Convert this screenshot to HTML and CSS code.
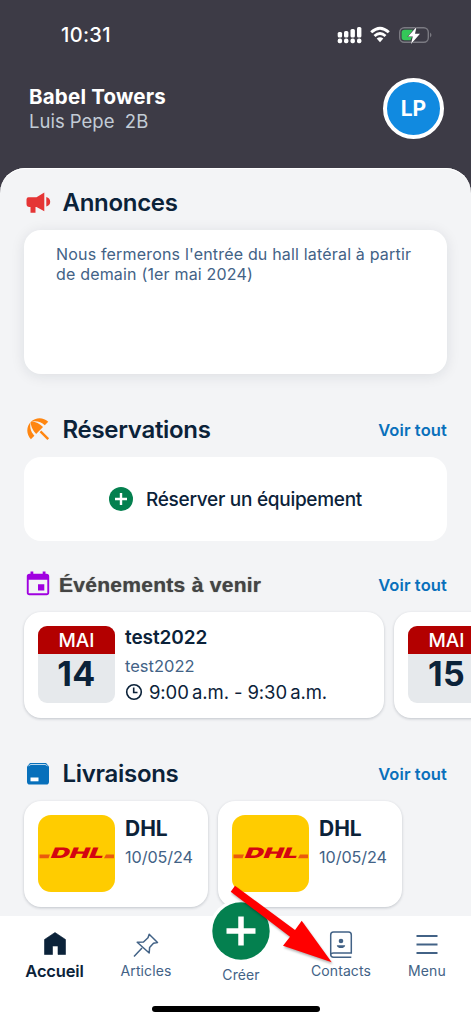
FILE: index.html
```html
<!DOCTYPE html>
<html lang="fr">
<head>
<meta charset="utf-8">
<title>Babel Towers</title>
<link rel="stylesheet" href="styles.css">
</head>
<body>
<div class="app">
  <header class="top">
    <div class="status">
      <span class="clock">10:31</span>
      <svg class="status-icons" width="96" height="20" viewBox="0 0 96 20">
        <g fill="#fff">
          <rect x=".7" y="7" width="4.400" height="5.500" rx="1.500"/><rect x="7" y="6" width="4.400" height="6.500" rx="1.500"/><rect x="13.500" y="4" width="4.400" height="8.500" rx="1.500"/><rect x="20" y="2" width="4.400" height="10.500" rx="1.500"/>
          <rect x=".7" y="13.600" width="4.400" height="4.600" rx="1.800"/><rect x="7" y="13.600" width="4.400" height="4.600" rx="1.800"/><rect x="13.500" y="13.600" width="4.400" height="4.600" rx="1.800"/><rect x="20" y="13.600" width="4.400" height="4.600" rx="1.800"/>
        </g>
        <g fill="none" stroke="#fff" stroke-width="2.900">
          <path d="M34.200 7.300Q43 -.9 51.800 7.300"/><path d="M37.500 11Q43 6 48.500 11"/>
        </g>
        <path d="M39.700 13.600Q43 10.900 46.300 13.600L43 17.200Z" fill="#fff"/>
        <rect x="62.700" y="2.700" width="28.600" height="14.600" rx="4.500" fill="none" stroke="#7b7a82" stroke-width="1.400"/>
        <path d="M93 7.500q3 2.500 0 5z" fill="#7b7a82"/>
        <path d="M67.500 4.800H76L71 12H75L73.500 15.300H67.500Q64.600 15.300 64.600 12.500V7.500Q64.600 4.800 67.500 4.800Z" fill="#34c759"/>
        <path d="M79.500 2L71 11.500H75.800L74 19L83 8.800H78Z" fill="#fff" stroke="#3d3b46" stroke-width="1" paint-order="stroke"/>
      </svg>
    </div>
    <div class="profile">
      <div>
        <div class="building">Babel Towers</div>
        <div class="resident">Luis Pepe&nbsp; 2B</div>
      </div>
      <div class="avatar">LP</div>
    </div>
  </header>

  <main class="sheet">
    <section class="section first">
      <div class="head">
        <svg class="head-icon" width="28" height="28" viewBox="0 0 28 28"><path fill="#e53535" d="M4.500 8.200H12.500L20.300 3.400V22.200L12.500 18H11.500V23.800H6.500V18H5.500Q2.500 18 2.500 15V10.500Q2.500 8.200 4.500 8.200ZM22.300 8Q26.200 9.200 26.200 12.800T22.300 17.500Z"/></svg>
        <h2 class="title t-ann">Annonces</h2>
      </div>
      <div class="card announce"><p class="announce-text">Nous fermerons l'entrée du hall latéral à partir<br>de demain (1er mai 2024)</p></div>
    </section>

    <section class="section">
      <div class="head">
        <svg class="head-icon" width="28" height="28" viewBox="0 0 28 28"><path fill="#ff8611" transform="translate(-.3 -1.400) scale(1.210)" d="M13.127 14.560l1.430-1.430 6.440 6.443L19.570 21zm4.293-5.730l2.860-2.860c-3.950-3.950-10.350-3.960-14.300-.02 3.930-1.300 8.310-.25 11.440 2.880zM5.950 5.980c-3.940 3.950-3.930 10.350.02 14.300l2.860-2.860C5.700 14.290 4.650 9.910 5.950 5.980zm.02-.02l-.01.01c-.38 3.010 1.170 6.880 4.300 10.020l5.720-5.720c-3.130-3.130-7-4.690-10.010-4.310z"/></svg>
        <h2 class="title t-res">Réservations</h2>
        <a class="more">Voir tout</a>
      </div>
      <div class="card reserve">
        <svg width="24" height="24" viewBox="0 0 24 24"><circle cx="12" cy="12" r="12" fill="#04804f"/><path d="M12 6v12M6 12h12" stroke="#fff" stroke-width="2.400"/></svg>
        <span class="reserve-text">Réserver un équipement</span>
      </div>
    </section>

    <section class="section tight">
      <div class="head events-head">
        <svg class="head-icon" width="28" height="28" viewBox="0 0 28 28"><path fill="#a000e0" fill-rule="evenodd" d="M6.500 .5H9.300V2.800H18.700V.5H21.500V2.800H22.500Q25.200 2.800 25.200 5.500V21.500Q25.200 24.200 22.500 24.200H5.500Q2.800 24.200 2.800 21.500V5.500Q2.800 2.800 5.500 2.800H6.500ZM4.700 8.800V22.200H23.300V8.800ZM14 13.200H20.300V19.500H14Z"/></svg>
        <h2 class="title t-evt">Événements à venir</h2>
        <a class="more">Voir tout</a>
      </div>
      <div class="row">
        <article class="card event">
          <div class="date"><span class="month">MAI</span><span class="day">14</span></div>
          <div class="info">
            <div class="name">test2022</div>
            <div class="sub">test2022</div>
            <div class="time"><svg width="18" height="18" viewBox="0 0 18 18" fill="none" stroke="#0b2239" stroke-width="1.600"><circle cx="9" cy="9" r="7.300"/><path d="M8.700 4.500V9.500H12.500"/></svg><span>9:00&#8239;a.m. - 9:30&#8239;a.m.</span></div>
          </div>
        </article>
        <article class="card event">
          <div class="date"><span class="month">MAI</span><span class="day">15</span></div>
        </article>
      </div>
    </section>

    <section class="section">
      <div class="head">
        <svg class="head-icon" width="28" height="28" viewBox="0 0 28 28"><path fill="#0870bb" d="M6 3H22L25 6.500V21.700Q25 24.500 22.200 24.500H5.800Q3 24.500 3 21.700V6.500Z"/><path d="M4.600 6.200Q5.500 4.500 7 4.500H21Q22.500 4.500 23.400 6.200" fill="none" stroke="#b9d9ef" stroke-width="1"/><rect x="6.500" y="17.500" width="8" height="3.800" fill="#fff"/></svg>
        <h2 class="title t-liv">Livraisons</h2>
        <a class="more">Voir tout</a>
      </div>
      <div class="row">
        <article class="card parcel">
          <svg class="brand" width="77" height="77" viewBox="0 0 77 77"><rect width="77" height="77" rx="13" fill="#fc0"/><path d="M1.500 39.500H12L10.500 43.300H1.500ZM68 39.500H76V43.300H66Z" fill="#ea5b0c"/><text class="dhl" x="11.500" y="43.300" textLength="53" lengthAdjust="spacingAndGlyphs" transform="translate(17.500 0) skewX(-22)">DHL</text></svg>
          <div class="info"><div class="carrier">DHL</div><div class="sub sub-date">10/05/24</div></div>
        </article>
        <article class="card parcel">
          <svg class="brand" width="77" height="77" viewBox="0 0 77 77"><rect width="77" height="77" rx="13" fill="#fc0"/><path d="M1.500 39.500H12L10.500 43.300H1.500ZM68 39.500H76V43.300H66Z" fill="#ea5b0c"/><text class="dhl" x="11.500" y="43.300" textLength="53" lengthAdjust="spacingAndGlyphs" transform="translate(17.500 0) skewX(-22)">DHL</text></svg>
          <div class="info"><div class="carrier">DHL</div><div class="sub sub-date">10/05/24</div></div>
        </article>
      </div>
    </section>
  </main>

  <nav class="tabs">
    <a class="tab active"><svg width="28" height="28" viewBox="0 0 28 28"><path fill="#0b2239" d="M14 2.500L24.500 9.500V24.500H17V16H11.500V24.500H3.500V9.500Z" stroke="#0b2239" stroke-width=".6" stroke-linejoin="round"/></svg><span class="t-home">Accueil</span></a>
    <a class="tab"><svg width="28" height="28" viewBox="0 0 28 28" fill="none" stroke="#426286" stroke-width="1.500" stroke-linejoin="round"><path d="M17.200 4.200L25.500 12.500L21.500 13.200L17.600 17.500L17.200 23L5.200 12.300L11.500 12L16 7.800ZM10 18L2 26.500"/></svg><span class="t-art">Articles</span></a>
    <a class="tab create"><span class="fab"><svg width="58" height="58" viewBox="0 0 58 58"><circle cx="29" cy="29" r="28.700" fill="#04804f"/><path d="M29 14.500V43.500M14.500 29H43.500" stroke="#fff" stroke-width="5.500"/></svg></span><span class="t-create">Créer</span></a>
    <a class="tab"><svg width="28" height="28" viewBox="0 0 28 28" fill="none" stroke="#426286" stroke-width="1.500"><path d="M24.300 27.200H6.500Q3.700 27.200 3.700 24.500V5Q3.700 2 6.500 2H21.500Q24.300 2 24.300 5V23H6.500Q3.700 23 3.700 25"/><circle cx="14" cy="11" r="2.300" fill="#426286" stroke="none"/><path d="M9.800 15.200H18.200Q17.800 18 14 18T9.800 15.200Z" fill="#426286" stroke="none"/></svg><span class="t-con">Contacts</span></a>
    <a class="tab"><svg width="28" height="28" viewBox="0 0 28 28" stroke="#426286" stroke-width="2"><path d="M3.500 6H24.500M3.500 14.500H24.500M3.500 23H24.500"/></svg><span class="t-menu">Menu</span></a>
    <span class="home-bar"></span>
  </nav>
  <svg class="arrow" width="110" height="85" viewBox="0 0 110 85"><path fill="red" d="M10 5.700L70 50L76.700 40.700L106.700 82.300L58 65.700L65 56.700L5.700 11.700Z"/></svg>
</div>
</body>
</html>
```
FILE: styles.css
```css
* { box-sizing: border-box; }
body { margin: 0; background: #3d3b46; font-family: Inter, "Liberation Sans", sans-serif; }
.app { position: relative; width: 471px; height: 1022px; overflow: hidden; display: flex; flex-direction: column; color: #0b2239; white-space: nowrap; }

.top { height: 168px; padding: 25px 27px 0 29px; color: #fff; flex: none; }
.status { display: flex; justify-content: space-between; height: 20px; align-items: center; padding: 0 11px 0 32px; }
.status-icons { flex: none; }
.clock { font-size: 20px; font-weight: 500; line-height: 22px; letter-spacing: .35px; }
.profile { display: flex; justify-content: space-between; align-items: center; margin-top: 32px; height: 62px; }
.building { font-size: 20.500px; font-weight: 700; line-height: 25px; letter-spacing: .2px; margin-top: 2px; }
.resident { font-size: 18.500px; line-height: 25px; color: #c3ccd6; }
.avatar { width: 61px; height: 61px; border: 4px solid #fff; border-radius: 50%; background: #118ae0; display: grid; place-items: center; font-size: 21px; font-weight: 700; }

.sheet { height: 748px; flex: none; background: #f3f4f6; border-radius: 25px 25px 0 0; padding: 8px 24px 0; overflow: hidden; box-shadow: inset 0 1px 0 #fff; }
.section { margin-top: 29px; }
.section.first { margin-top: 0; }
.section.tight { margin-top: 17px; }
.head { display: flex; align-items: center; height: 54px; }
.head-icon { flex: none; margin-right: 10.500px; }
.title { margin: 0; font-size: 24px; font-weight: 600; line-height: 30px; letter-spacing: -.3px; }
.events-head .head-icon { margin-right: 7px; }
.t-evt { font-family: "Liberation Sans", Arial, sans-serif; font-size: 21px; font-weight: 700; color: #444; letter-spacing: .28px; text-shadow: 0 0 1px #777; }
.more { margin-left: auto; font-size: 16.500px; font-weight: 600; color: #0870bb; letter-spacing: .12px; padding-bottom: 1px; }

.card { background: #fff; border-radius: 17px; flex: none; }
.announce { height: 144px; padding: 14px 32px; box-shadow: 0 2px 14px rgba(20, 30, 50, .1); }
.announce-text { margin: 0; font-size: 16px; line-height: 20px; color: #426286; letter-spacing: .18px; }
.reserve { height: 84px; display: flex; align-items: center; justify-content: center; gap: 13px; font-size: 19px; font-weight: 500; letter-spacing: -.28px; }
.row { display: flex; gap: 10px; }
.event, .parcel { height: 106px; padding: 14px; display: flex; gap: 10px; box-shadow: 0 1px 3px rgba(20, 30, 50, .22); }
.event { width: 360px; }
.parcel { width: 184px; }
.brand { flex: none; }
.date { width: 77px; height: 77px; border-radius: 9px; background: #e6e9ec; overflow: hidden; text-align: center; display: flex; flex-direction: column; flex: none; }
.month { height: 28px; background: #b30000; color: #fff; font-size: 19px; font-weight: 500; line-height: 29px; }
.day { font-size: 34px; font-weight: 700; line-height: 40px; letter-spacing: .3px; }
.name { font-size: 19px; font-weight: 600; line-height: 24px; letter-spacing: -.1px; }
.sub { font-size: 16.500px; line-height: 24px; margin-top: 4px; color: #426286; }
.sub-date { font-size: 16.200px; letter-spacing: -.08px; margin-top: 2px; }
.time { display: flex; align-items: center; gap: 6px; height: 24px; margin-top: 2px; font-size: 18.500px; letter-spacing: -.1px; }
.carrier { font-size: 21px; font-weight: 700; line-height: 28px; }
.dhl { font-family: Inter, sans-serif; font-size: 14.500px; font-weight: 900; fill: #d40511; }

.tabs { position: relative; flex: none; height: 106px; background: #fff; display: grid; grid-template-columns: 109px 74px 116px 84px 88px; padding-top: 14px; }
.tab { display: flex; flex-direction: column; align-items: center; font-size: 14px; line-height: 20px; color: #426286; gap: 3px; letter-spacing: .1px; }
.active { color: #0b2239; font-size: 16.500px; font-weight: 600; letter-spacing: -.15px; }
.create { margin-top: -31px; gap: 7px; }
.fab { width: 64px; height: 64px; padding: 3px; border-radius: 50%; background: #fff; }
.fab svg { display: block; }
.t-create { margin-top: -5px; }
.home-bar { position: absolute; left: 152px; top: 90px; width: 168px; height: 6px; border-radius: 3px; background: #000; }
.arrow { position: absolute; left: 225px; top: 880px; filter: drop-shadow(1px 2px 1px rgba(0, 0, 0, .3)); }
```
